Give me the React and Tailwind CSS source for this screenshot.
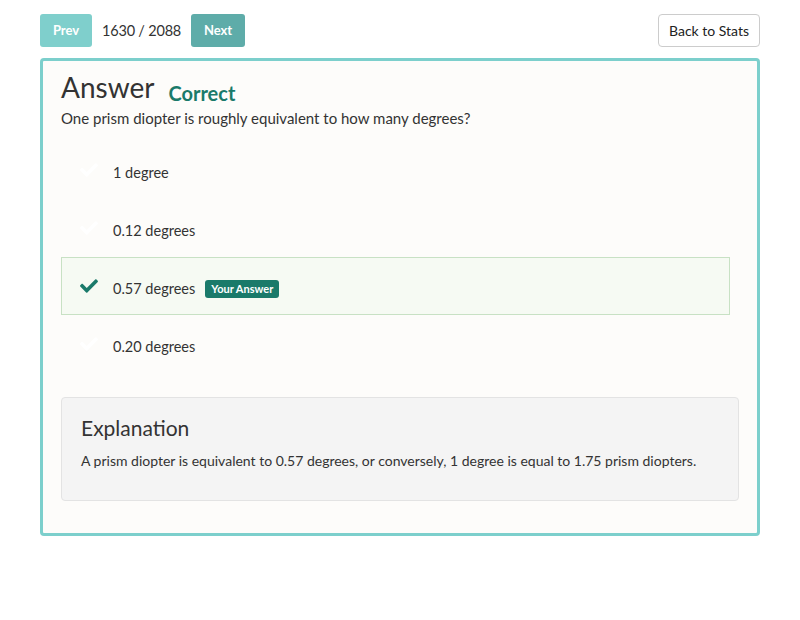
import React from "react";
import { FaCheck } from "react-icons/fa";

const options = [
  { text: "1 degree" },
  { text: "0.12 degrees" },
  { text: "0.57 degrees", selected: true },
  { text: "0.20 degrees" },
];

export default function App() {
  return (
    <div className="min-h-[620px] w-[800px] bg-white text-[#333] pt-[14px] px-[40px]" style={{ fontFamily: "Lato, 'Open Sans', sans-serif" }}>
      <div className="flex items-center justify-between h-[33px]">
        <div className="flex items-center">
          <button className="h-[33px] w-[52px] rounded-[3px] bg-[#7fcfcc] text-white font-bold text-[13px]">Prev</button>
          <span className="mx-[10px] text-[14.5px] tracking-[-0.2px] text-[#333]">1630 / 2088</span>
          <button className="h-[33px] w-[54px] rounded-[3px] bg-[#5eaca9] text-white font-bold text-[13px]">Next</button>
        </div>
        <button className="h-[33px] w-[102px] rounded-[4px] border border-[#cccccc] bg-white text-[14px] text-[#222]">Back to Stats</button>
      </div>
      <div className="mt-[11px] h-[478px] rounded-[4px] border-[3px] border-[#7ccfcc] bg-[#fdfcfa] pl-[18px] pr-[18px] pt-[8px]">
        <div className="flex items-end h-[36px]">
          <h1 className="text-[28px] leading-[36px] text-[#333]">Answer</h1>
          <span className="ml-[14px] mb-[-3px] text-[20px] font-bold text-[#1a7a6a]">Correct</span>
        </div>
        <p className="mt-[3px] text-[15px] leading-[20px]">One prism diopter is roughly equivalent to how many degrees?</p>
        <div className="mt-[13px] w-[669px]">
          {options.map((o) => (
            <div
              key={o.text}
              className={
                "flex items-center h-[58px] border " +
                (o.selected ? "border-[#c8e1c4] bg-[#f6faf3]" : "border-transparent")
              }
            >
              <FaCheck className={"ml-[16px] w-[22px] h-[18px] " + (o.selected ? "text-[#1a7a6a]" : "text-white")} />
              <span className="ml-[13px] text-[14.5px] mt-[5px]">{o.text}</span>
              {o.selected && (
                <span className="ml-[10px] mt-[5px] rounded-[3px] bg-[#1a7a6a] px-[6px] h-[18px] leading-[18px] text-[11px] font-bold text-white">Your Answer</span>
              )}
            </div>
          ))}
        </div>
        <div className="mt-[24px] w-[678px] h-[104px] rounded-[4px] border border-[#e3e3e3] bg-[#f4f4f4] px-[19px] pt-[17px]">
          <h2 className="text-[21px] leading-[26px] text-[#333]">Explanation</h2>
          <p className="mt-[10px] text-[14px] leading-[20px]">A prism diopter is equivalent to 0.57 degrees, or conversely, 1 degree is equal to 1.75 prism diopters.</p>
        </div>
      </div>
    </div>
  );
}
